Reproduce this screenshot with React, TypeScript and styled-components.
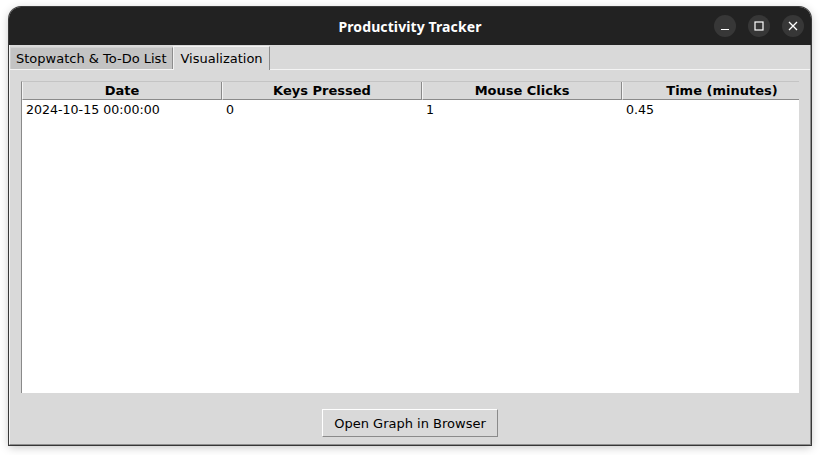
import React from "react";
import styled, { createGlobalStyle } from "styled-components";

const Global = createGlobalStyle`
  html, body { margin: 0; padding: 0; background: #ffffff; }
  body { width: 820px; height: 455px; overflow: hidden; font-family: "DejaVu Sans", "Noto Sans", sans-serif; }
  * { box-sizing: border-box; }
`;

const Page = styled.div`
  width: 820px;
  height: 455px;
  padding: 7px 9px 0 9px;
`;

const Window = styled.div`
  width: 802px;
  height: 438px;
  display: flex;
  flex-direction: column;
  border-radius: 12px 12px 0 0;
  background: #d9d9d9;
  box-shadow: 0 2px 10px rgba(0, 0, 0, 0.25), 0 0 0 1px rgba(0, 0, 0, 0.75);
  overflow: hidden;
`;

const TitleBar = styled.div`
  height: 38px;
  flex: none;
  background: #222222;
  display: flex;
  align-items: center;
  justify-content: center;
  position: relative;
`;

const Title = styled.div`
  color: #ffffff;
  font-family: "Noto Sans", "DejaVu Sans", sans-serif;
  font-weight: 700;
  font-size: 14px;
  letter-spacing: 0.1px;
`;

const Controls = styled.div`
  position: absolute;
  right: 7px;
  top: 8px;
  display: flex;
  gap: 12px;
`;

const CtrlBtn = styled.div`
  width: 22px;
  height: 22px;
  border-radius: 50%;
  background: #373737;
  display: flex;
  align-items: center;
  justify-content: center;
`;

const Body = styled.div`
  flex: 1;
  display: flex;
  flex-direction: column;
  border-left: 1px solid #f4f4f4;
  border-right: 1px solid #8e8e8e;
  border-bottom: 1px solid #8e8e8e;
`;

const TabRow = styled.div`
  height: 24px;
  display: flex;
  align-items: flex-end;
`;

const Tab = styled.div<{ $active?: boolean }>`
  font-size: 13px;
  color: #000;
  height: ${(p) => (p.$active ? 24 : 22)}px;
  padding: 0 6px 0 ${(p) => (p.$active ? 6 : 5)}px;
  display: flex;
  align-items: center;
  background: ${(p) => (p.$active ? "#d9d9d9" : "#c3c3c3")};
  border-top: 1px solid ${(p) => (p.$active ? "#f2f2f2" : "#d0d0d0")};
  border-left: 1px solid ${(p) => (p.$active ? "#f2f2f2" : "#d0d0d0")};
  border-right: 1px solid #8d8d8d;
  margin-bottom: ${(p) => (p.$active ? -1 : 0)}px;
  position: relative;
  z-index: ${(p) => (p.$active ? 1 : 0)};
`;

const Frame = styled.div`
  flex: 1;
  border-top: 1px solid #f4f4f4;
  display: flex;
  flex-direction: column;
  padding: 11px 11px 0 11px;
`;

const TableBox = styled.div`
  height: 312px;
  background: #ffffff;
  overflow: hidden;
  border-top: 1px solid #c4c4c4;
  border-left: 1px solid #8a8a8a;
`;

const Grid = styled.div`
  display: grid;
  grid-template-columns: 200px 200px 200px 200px;
  width: 800px;
`;

const HeadCell = styled.div`
  height: 18px;
  background: #d9d9d9;
  font-weight: 700;
  font-size: 13px;
  display: flex;
  align-items: center;
  justify-content: center;
  border-right: 1px solid #8a8a8a;
  border-left: 1px solid #f4f4f4;
  border-bottom: 1px solid #8a8a8a;
  color: #000;
`;

const Cell = styled.div`
  height: 19px;
  font-size: 12.6px;
  padding-left: 4px;
  display: flex;
  align-items: center;
  color: #000;
`;

const Footer = styled.div`
  flex: 1;
  display: flex;
  justify-content: center;
  align-items: flex-start;
  padding-top: 16px;
`;

const Button = styled.div`
  width: 176px;
  height: 28px;
  font-size: 13px;
  display: flex;
  align-items: center;
  justify-content: center;
  background: #d9d9d9;
  border-top: 1px solid #ffffff;
  border-left: 1px solid #ffffff;
  border-right: 1px solid #8a8a8a;
  border-bottom: 1px solid #8a8a8a;
  color: #000;
`;

const headers = ["Date", "Keys Pressed", "Mouse Clicks", "Time (minutes)"];
const rows = [["2024-10-15 00:00:00", "0", "1", "0.45"]];

export default function App() {
  return (
    <>
      <Global />
      <Page>
        <Window>
          <TitleBar>
            <Title>Productivity Tracker</Title>
            <Controls>
              <CtrlBtn>
                <svg width="10" height="10" viewBox="0 0 10 10">
                  <path d="M1 8.5h8" stroke="#fff" strokeWidth="1.2" />
                </svg>
              </CtrlBtn>
              <CtrlBtn>
                <svg width="10" height="10" viewBox="0 0 10 10">
                  <rect x="1" y="1" width="8" height="8" fill="none" stroke="#fff" strokeWidth="1.2" />
                </svg>
              </CtrlBtn>
              <CtrlBtn>
                <svg width="10" height="10" viewBox="0 0 10 10">
                  <path d="M1 1l8 8M9 1l-8 8" stroke="#fff" strokeWidth="1.3" />
                </svg>
              </CtrlBtn>
            </Controls>
          </TitleBar>
          <Body>
            <TabRow>
              <Tab>Stopwatch &amp; To-Do List</Tab>
              <Tab $active>Visualization</Tab>
            </TabRow>
            <Frame>
              <TableBox>
                <Grid>
                  {headers.map((h) => (
                    <HeadCell key={h}>{h}</HeadCell>
                  ))}
                  {rows.map((r) =>
                    r.map((c, i) => <Cell key={i}>{c}</Cell>)
                  )}
                </Grid>
              </TableBox>
              <Footer>
                <Button>Open Graph in Browser</Button>
              </Footer>
            </Frame>
          </Body>
        </Window>
      </Page>
    </>
  );
}
